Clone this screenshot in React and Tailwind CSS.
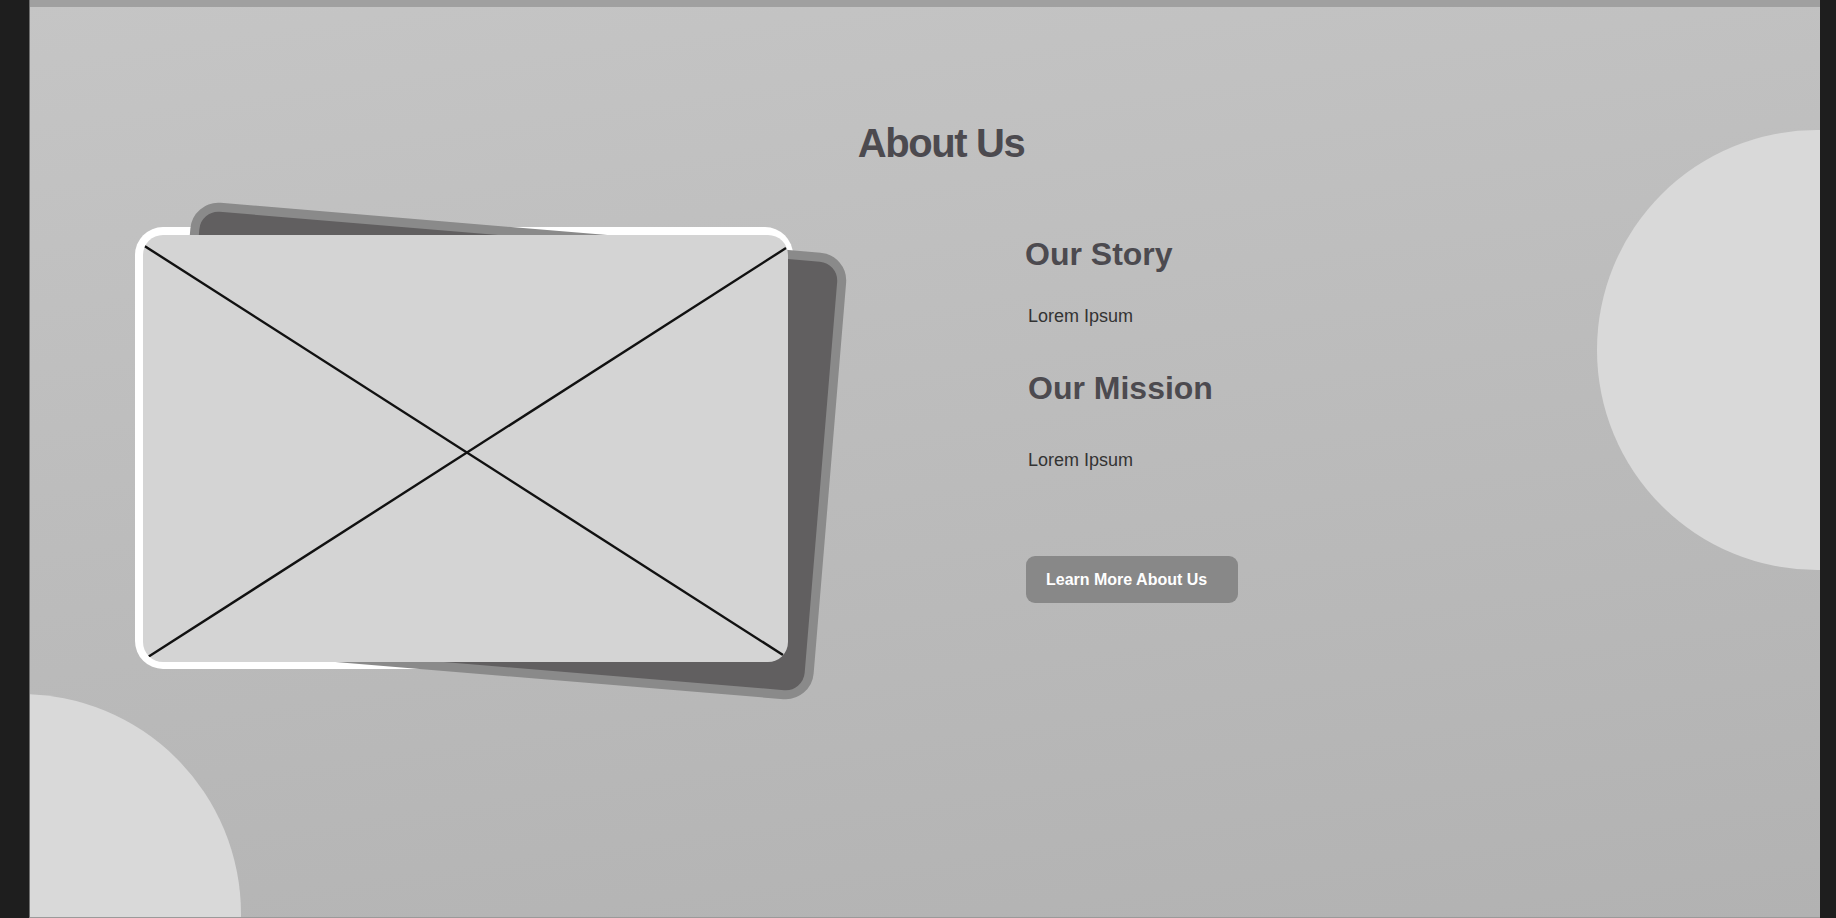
import React from 'react';

const font = { fontFamily: '"Liberation Sans", Arial, sans-serif' };

const ImageCard = () => (
  <div className="relative w-[658px] h-[442px] shrink-0">
    {/* white frame sits behind the tilted card */}
    <div className="absolute inset-0 rounded-[28px] bg-white" />
    {/* tilted backing card */}
    <div className="absolute left-[38px] top-0 w-[658px] h-[448px] rotate-[4.75deg] rounded-[28px] border-[9px] border-[#8a8a8a] bg-[#615f60]" />
    {/* placeholder image */}
    <div className="absolute left-[8px] top-[8px] w-[645px] h-[427px] rounded-[20px] bg-[#d4d4d4] overflow-hidden">
      <svg width="645" height="427" viewBox="0 0 645 427" className="block">
        <line x1="0" y1="10" x2="640" y2="420" stroke="#111" strokeWidth="2.4" />
        <line x1="5" y1="422" x2="643" y2="13" stroke="#111" strokeWidth="2.4" />
      </svg>
    </div>
  </div>
);

const App = () => {
  return (
    <div className="w-[1836px] h-[918px] bg-[#1e1e1e] flex" style={font}>
      <div className="ml-[29px] w-[1791px] h-full relative overflow-hidden border-l border-[#6e6e6e] border-b border-b-[#9a9a9a] bg-[linear-gradient(172deg,#c5c5c5_0%,#b2b2b2_100%)] flex flex-col">
        <div className="h-[7px] bg-[#a0a0a0] shrink-0" />

        {/* decorative circles */}
        <div className="absolute left-[1567px] top-[130px] w-[440px] h-[440px] rounded-full bg-[#d9d9d9]" />
        <div className="absolute left-[-229px] top-[694px] w-[440px] h-[440px] rounded-full bg-[#d9d9d9]" />

        <div className="relative mt-[116px] flex justify-center pl-[32px]">
          <h1 className="text-[40px] leading-none font-bold tracking-[-0.035em] text-[#4c4a4f]">About Us</h1>
        </div>

        <div className="relative mt-[64px] flex items-start pl-[105px]">
          <ImageCard />

          <div className="ml-[235px] mt-[11px] flex flex-col items-start">
            <h2 className="-ml-[3px] text-[32px] leading-none font-bold text-[#4c4a4f]">Our Story</h2>
            <p className="mt-[37px] text-[18px] leading-none text-[#333333]">Lorem Ipsum</p>
            <h2 className="mt-[47px] text-[32px] leading-none font-bold text-[#4c4a4f]">Our Mission</h2>
            <p className="mt-[47px] text-[18px] leading-none text-[#333333]">Lorem Ipsum</p>
            <button className="mt-[87px] -ml-[2px] w-[212px] h-[47px] rounded-[9px] bg-[#888888] pl-[20px] text-left text-[16px] font-bold text-white">
              Learn More About Us
            </button>
          </div>
        </div>
      </div>
    </div>
  );
};

export default App;
